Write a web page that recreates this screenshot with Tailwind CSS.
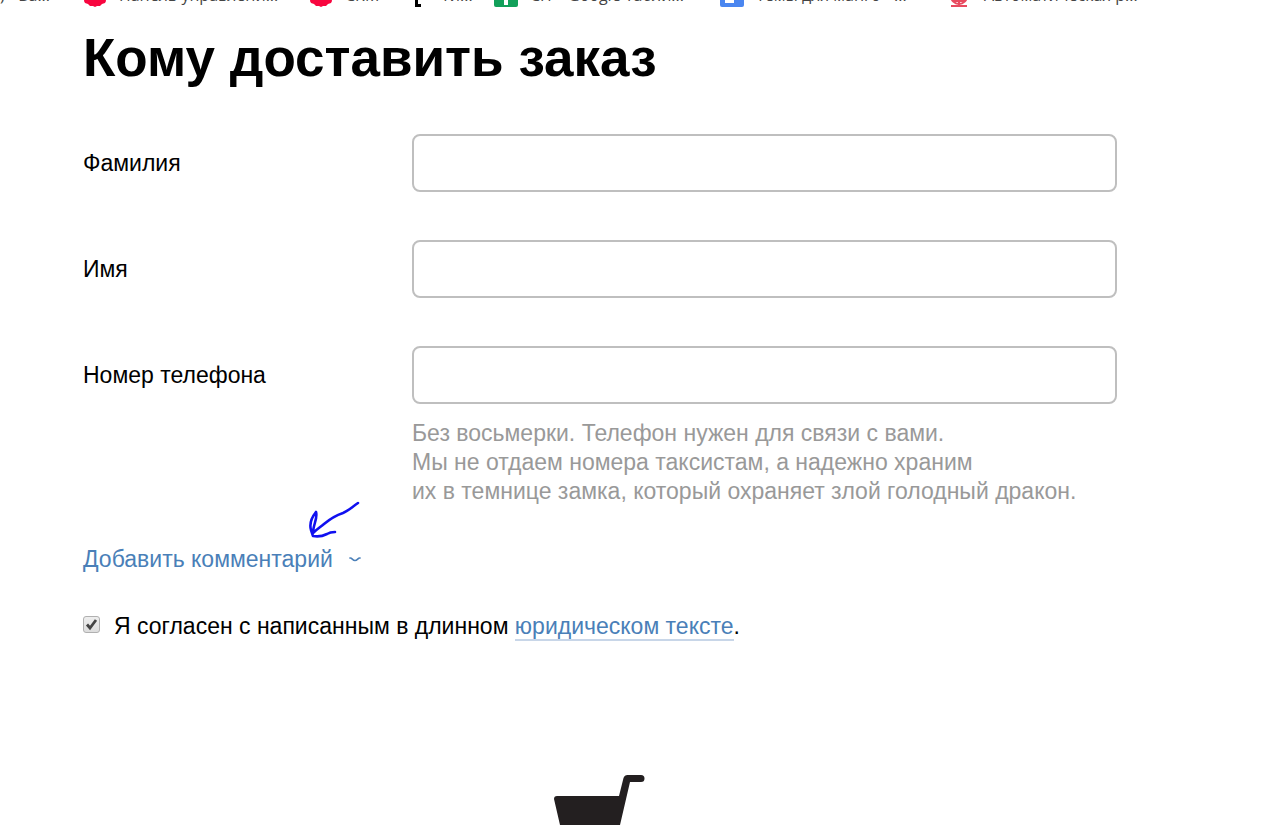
<!DOCTYPE html>
<html lang="ru">
<head>
    <meta charset="UTF-8">
    <meta name="viewport" content="width=device-width, initial-scale=1.0">
    <title>Кому доставить заказ</title>
    <script src="https://cdn.jsdelivr.net/npm/@tailwindcss/browser@4"></script>
</head>
<body class="bg-white text-black font-['Liberation_Sans',Arial,sans-serif]">

    <!-- Bookmarks bar, only its lower edge is visible -->
    <nav class="h-2 overflow-hidden grid grid-cols-[83px_226px_104px_81px_226px_228px_1fr] content-end whitespace-nowrap font-['Open_Sans','Noto_Sans',sans-serif] text-base leading-[22px] text-[#444]">
        <a href="#" class="block pb-[2px]">) - Ва...</a>
        <a href="#" class="flex items-center gap-3">
            <svg class="size-6 shrink-0" viewBox="0 0 24 24" fill="#f8063f"><path d="M3 4h18l2 13-1 2-3 1-2 2-3 0-2 1-2-1-3 0-2-2-3-1-1-2z"/></svg>
            <span class="pb-[2px]">Панель управлени...</span>
        </a>
        <a href="#" class="flex items-center gap-3">
            <svg class="size-6 shrink-0" viewBox="0 0 24 24" fill="#f8063f"><path d="M3 4h18l2 13-1 2-3 1-2 2-3 0-2 1-2-1-3 0-2-2-3-1-1-2z"/></svg>
            <span class="pb-[2px]">CRM</span>
        </a>
        <a href="#" class="flex items-center gap-1">
            <svg class="size-6 shrink-0" viewBox="0 0 24 24" fill="none" stroke="#000" stroke-width="3"><path d="M8 3H3.500V21.500H8"/></svg>
            <span class="pb-[2px]">Ти...</span>
        </a>
        <a href="#" class="flex items-center gap-3">
            <svg class="size-6 shrink-0" viewBox="0 0 24 24"><rect width="24" height="23" rx="2" fill="#12a05a"/><path d="M10 3h4v18h-4z" fill="#fff"/></svg>
            <span class="pb-[2px]">СП – Google Табли...</span>
        </a>
        <a href="#" class="flex items-center gap-3">
            <svg class="size-6 shrink-0" viewBox="0 0 24 24"><rect width="24" height="23" rx="2" fill="#4a86f0"/><path d="M5 10h9v9H5z" fill="#fff"/></svg>
            <span class="pb-[2px]">Темы для манго - ...</span>
        </a>
        <a href="#" class="flex items-center gap-3">
            <svg class="size-6 shrink-0" viewBox="0 0 24 24" fill="none" stroke="#e84a5f" stroke-width="2"><circle cx="11" cy="12" r="8"/><path d="M11 6v16M5 17h12M3 22h16"/></svg>
            <span class="pb-[2px]">Автоматическая р...</span>
        </a>
    </nav>

    <main class="px-[83px] pt-5">
        <h1 class="text-[53px] leading-[60px] font-bold">Кому доставить заказ</h1>

        <form class="mt-[46px] text-[23px] leading-[30px]">
            <div class="max-w-[1034px] grid grid-cols-[329px_1fr] items-center">
                <label for="surname">Фамилия</label>
                <input id="surname" type="text" class="w-full h-[58px] px-4 border-2 border-[#bfbfbf] rounded-lg">

                <label for="name" class="mt-12">Имя</label>
                <input id="name" type="text" class="mt-12 w-full h-[58px] px-4 border-2 border-[#bfbfbf] rounded-lg">

                <label for="phone" class="mt-12">Номер телефона</label>
                <input id="phone" type="tel" aria-describedby="phone-hint" class="mt-12 w-full h-[58px] px-4 border-2 border-[#bfbfbf] rounded-lg">

                <p id="phone-hint" class="col-start-2 mt-[15px] leading-[29px] text-[#999]">
                    Без восьмерки. Телефон нужен для связи с вами.<br>
                    Мы не отдаем номера таксистам, а надежно храним<br>
                    их в темнице замка, который охраняет злой голодный дракон.
                </p>
            </div>

            <!-- Comment toggle with a hand-drawn arrow over it -->
            <div class="relative mt-[38px] w-fit">
                <button type="button" class="flex items-center gap-4 text-[#4a7fb8]">
                    <span>Добавить комментарий</span>
                    <svg class="w-3 h-2" viewBox="0 0 12 8" fill="none" stroke="currentColor" stroke-width="1.6" stroke-linecap="round"><path d="M1 3C3 2.500 3.500 5.500 6 5.500C8.500 5.500 9 2.500 11 3"/></svg>
                </button>
                <svg class="absolute left-[225px] -top-[44px] w-[54px] h-10 pointer-events-none" viewBox="0 0 54 40" fill="none" stroke="#1010f0" stroke-width="2.600" stroke-linecap="round" stroke-linejoin="round">
                    <path d="M50 3C44 7 40 11 35 13C29 15 22 19 16 24C11 28 8 30 5 33M8 12C10 18 5 25 5 33M8 12C4 17 1 23 3 30L5 36C10 37 15 36 19 34C22 32 24 32 27 32"/>
                </svg>
            </div>

            <div class="mt-[37px] flex items-center">
                <span class="relative mr-[14px] mb-1 flex">
                    <input id="agree" type="checkbox" checked class="peer appearance-none size-[17px] border border-[#b0b0b0] rounded-[3px] bg-gradient-to-b from-[#eee] to-[#ddd]">
                    <svg class="absolute inset-0 size-[17px] pointer-events-none hidden peer-checked:block" viewBox="0 0 17 17" fill="none" stroke="#444" stroke-width="2.800"><path d="M4 8.500L7 12L13 4"/></svg>
                </span>
                <label for="agree">Я согласен с написанным в длинном <a href="#" class="text-[#4a7fb8] border-b-2 border-[#c8d6e8]">юридическом тексте</a>.</label>
            </div>
        </form>
    </main>

    <!-- Cart -->
    <div class="mt-[134px] pl-[554px]">
        <svg class="block w-[91px] h-[50px]" viewBox="0 0 91 50" fill="#231f20">
            <path d="M3 21H65L69.500 3Q70.500 0 73.500 0H87A3.500 3.500 0 0 1 87 7H76L66 50H6L0 24Q0 21 3 21Z"/>
        </svg>
    </div>

</body>
</html>
